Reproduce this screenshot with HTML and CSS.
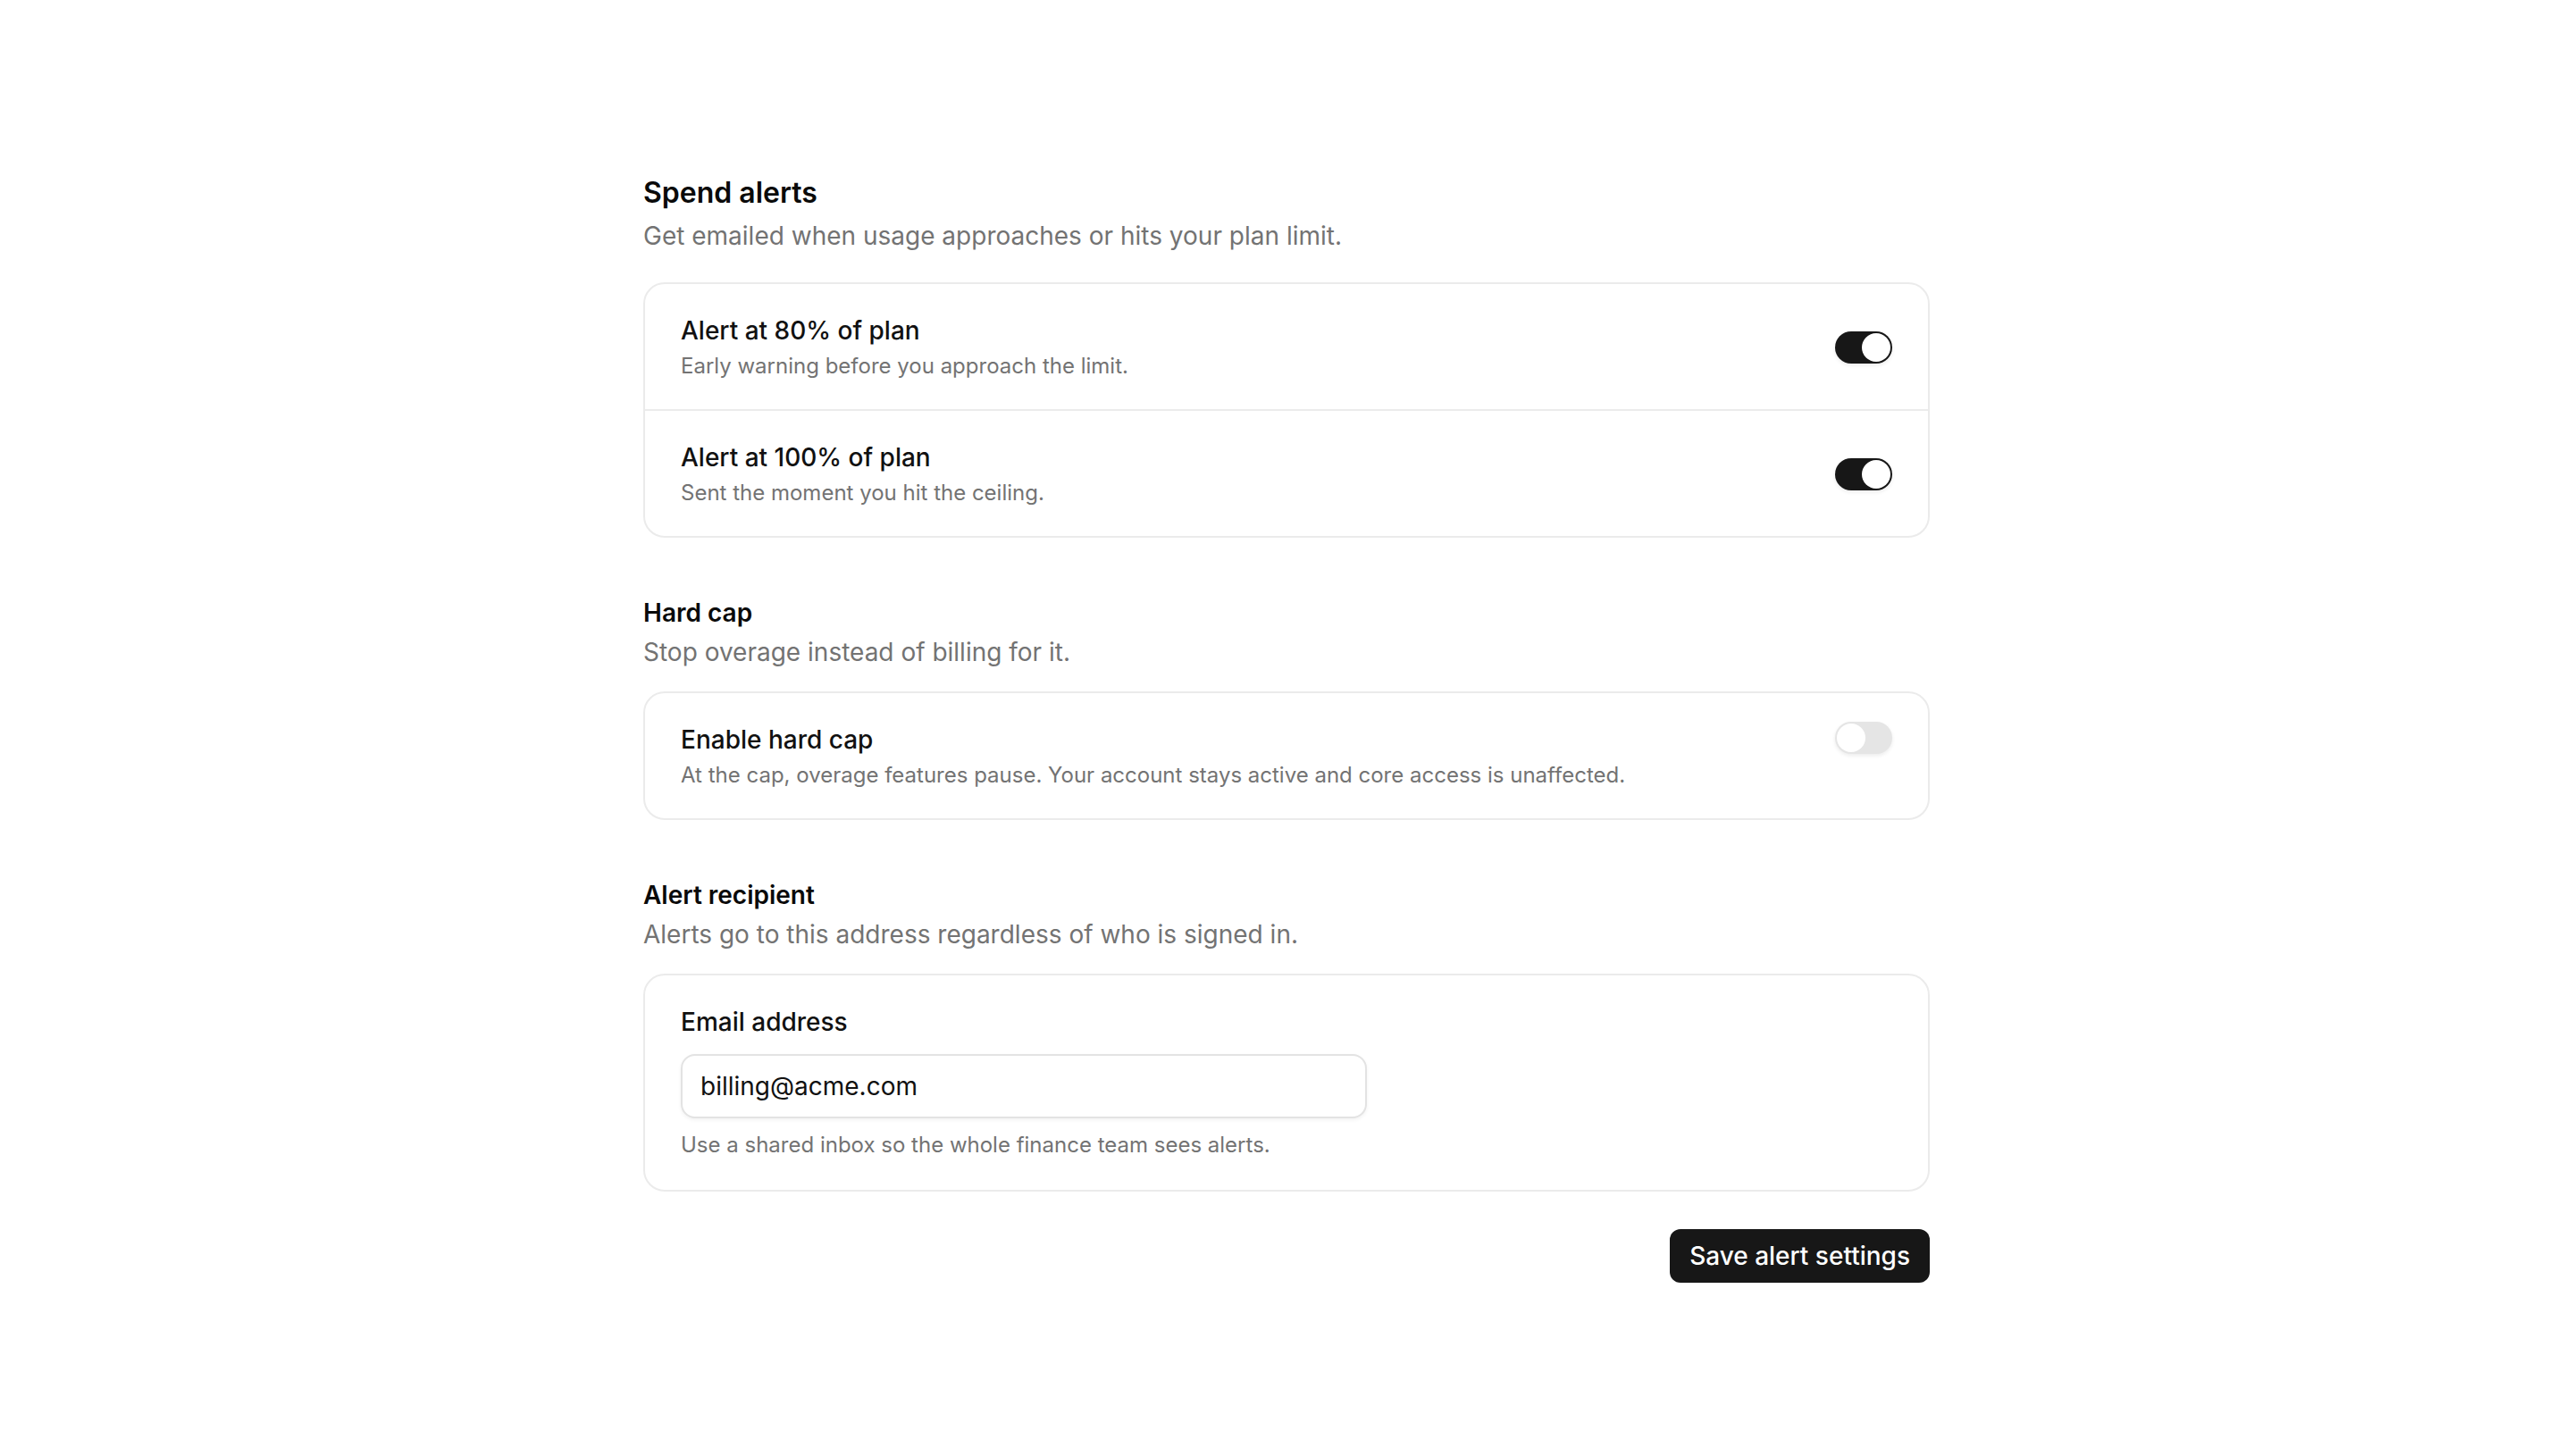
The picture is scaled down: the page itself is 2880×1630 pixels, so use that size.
FILE: index.html
```html
<!DOCTYPE html>
<html lang="en">
<head>
    <meta charset="UTF-8">
    <meta name="viewport" content="width=device-width, initial-scale=1.0">
    <title>Spend alerts</title>
    <link rel="stylesheet" href="styles.css">
</head>
<body>
    <main class="page">
        <div class="page-head">
            <h1 class="page-title">Spend alerts</h1>
            <p class="muted">Get emailed when usage approaches or hits your plan limit.</p>
        </div>

        <div class="card">
            <div class="setting-row">
                <div class="setting-text">
                    <div class="setting-title">Alert at 80% of plan</div>
                    <div class="setting-desc">Early warning before you approach the limit.</div>
                </div>
                <button type="button" class="switch on" role="switch" aria-checked="true" aria-label="Alert at 80% of plan"><span class="knob"></span></button>
            </div>
            <div class="setting-row">
                <div class="setting-text">
                    <div class="setting-title">Alert at 100% of plan</div>
                    <div class="setting-desc">Sent the moment you hit the ceiling.</div>
                </div>
                <button type="button" class="switch on" role="switch" aria-checked="true" aria-label="Alert at 100% of plan"><span class="knob"></span></button>
            </div>
        </div>

        <section class="section">
            <div class="section-head">
                <h2 class="section-title">Hard cap</h2>
                <p class="muted">Stop overage instead of billing for it.</p>
            </div>
            <div class="card">
                <div class="setting-row top">
                    <div class="setting-text">
                        <div class="setting-title">Enable hard cap</div>
                        <div class="setting-desc">At the cap, overage features pause. Your account stays active and core access is unaffected.</div>
                    </div>
                    <button type="button" class="switch" role="switch" aria-checked="false" aria-label="Enable hard cap"><span class="knob"></span></button>
                </div>
            </div>
        </section>

        <section class="section">
            <div class="section-head">
                <h2 class="section-title">Alert recipient</h2>
                <p class="muted">Alerts go to this address regardless of who is signed in.</p>
            </div>
            <div class="card field-card">
                <label class="field-label" for="email">Email address</label>
                <input type="email" id="email" class="field-input" value="billing@acme.com">
                <div class="setting-desc field-help">Use a shared inbox so the whole finance team sees alerts.</div>
            </div>
        </section>

        <div class="actions">
            <button type="button" class="btn-primary">Save alert settings</button>
        </div>
    </main>

    <script>
        document.querySelectorAll('.switch').forEach(function (sw) {
            sw.addEventListener('click', function () {
                const on = sw.classList.toggle('on');
                sw.setAttribute('aria-checked', on ? 'true' : 'false');
            });
        });
    </script>
</body>
</html>
```

FILE: styles.css
```css
body {
    margin: 0;
    background: #FFFFFF;
    color: #111111;
    font-family: Inter, "Noto Sans", sans-serif;
}

.page {
    width: 1440px;
    margin: 0 auto;
    padding: 192px 0 120px;
}

.page-head {
    margin-bottom: 32px;
}

.page-title {
    margin: 0 0 4px;
    font-size: 32px;
    line-height: 48px;
    font-weight: 600;
    color: #0A0A0A;
}

.muted {
    margin: 0;
    font-size: 28px;
    line-height: 40px;
    color: #737373;
}

.section {
    margin-top: 64px;
}

.section-head {
    margin-bottom: 24px;
}

.section-title {
    margin: 0 0 4px;
    font-size: 28px;
    line-height: 40px;
    font-weight: 600;
    color: #0A0A0A;
}

.card {
    border: 2px solid #EBEBEB;
    border-radius: 24px;
    background: #FFFFFF;
}

.setting-row {
    display: flex;
    align-items: center;
    justify-content: space-between;
    gap: 32px;
    padding: 32px 40px 30px;
}

.setting-row + .setting-row {
    border-top: 2px solid #EBEBEB;
}

.setting-row.top {
    align-items: flex-start;
}

.setting-title {
    font-size: 28px;
    line-height: 40px;
    font-weight: 500;
    color: #111111;
}

.setting-desc {
    font-size: 24px;
    line-height: 36px;
    color: #737373;
}

.setting-title + .setting-desc {
    margin-top: 2px;
}

.switch {
    flex: none;
    display: flex;
    width: 64px;
    height: 36px;
    padding: 2px;
    border: none;
    border-radius: 18px;
    background: #E5E5E5;
    box-shadow: 0 2px 4px rgba(0, 0, 0, 0.08);
    cursor: pointer;
}

.switch .knob {
    width: 32px;
    height: 32px;
    border-radius: 50%;
    background: #FFFFFF;
    transition: transform 0.15s;
}

.switch.on {
    background: #171717;
}

.switch.on .knob {
    transform: translateX(28px);
}

.field-card {
    display: flex;
    flex-direction: column;
    align-items: flex-start;
    padding: 32px 40px;
}

.field-label {
    margin-bottom: 16px;
    font-size: 28px;
    line-height: 40px;
    font-weight: 500;
    color: #111111;
}

.field-input {
    box-sizing: border-box;
    width: 768px;
    height: 72px;
    padding: 14px 20px;
    border: 2px solid #E3E3E3;
    border-radius: 16px;
    box-shadow: 0 2px 4px rgba(0, 0, 0, 0.05);
    font-family: inherit;
    font-size: 28px;
    line-height: 40px;
    color: #111111;
    outline: none;
}

.field-input:focus {
    border-color: #A3A3A3;
}

.field-help {
    margin-top: 12px;
}

.actions {
    display: flex;
    justify-content: flex-end;
    margin-top: 42px;
}

.btn-primary {
    padding: 10px 22px;
    border: none;
    border-radius: 12px;
    background: #171717;
    color: #FFFFFF;
    font-family: inherit;
    font-size: 28px;
    line-height: 40px;
    font-weight: 500;
    cursor: pointer;
}

.btn-primary:hover {
    background: #333333;
}
```
